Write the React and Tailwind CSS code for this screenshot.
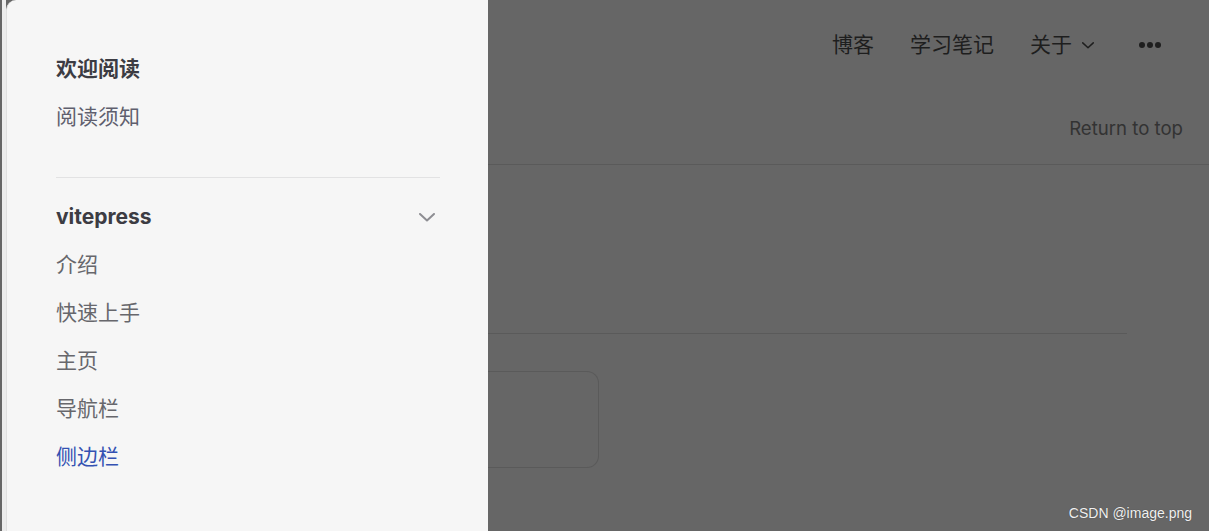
import React from "react";

const font = { fontFamily: 'Inter, "Noto Sans CJK SC", "Noto Sans", sans-serif' };

function Chevron({ className }) {
  return (
    <svg viewBox="0 0 16 9" className={className} fill="none">
      <path d="M1 1l7 6.5L15 1" stroke="currentColor" strokeWidth="2" strokeLinecap="round" strokeLinejoin="round" />
    </svg>
  );
}

export default function App() {
  const items = ["介绍", "快速上手", "主页", "导航栏"];
  return (
    <div className="flex w-[1209px] h-[531px] overflow-hidden bg-[#666666] relative" style={font}>
      <div className="w-[2px] shrink-0 bg-[#666666]" />
      <div className="w-[4px] shrink-0 bg-[#ececec]" />
      <aside className="w-[482px] shrink-0 bg-[#f6f6f6] border-l border-[#e0e0e0] rounded-tl-[10px] pl-[49px] pr-[48px] pt-[45px]">
        <div className="pb-[36px]">
          <div className="text-[21px] leading-[48px] font-bold text-[#3c3c43]">欢迎阅读</div>
          <div className="text-[21px] leading-[48px] text-[#5f5f6e]">阅读须知</div>
        </div>
        <div className="border-t border-[#e2e2e3] pt-[15px]">
          <div className="flex items-center justify-between h-[48px]">
            <span className="text-[21px] font-bold text-[#3c3c43]">vitepress</span>
            <Chevron className="w-[16px] h-[9px] mr-[5px] text-[#8e8e93]" />
          </div>
          {items.map((t) => (
            <div key={t} className="text-[21px] leading-[48px] text-[#67676c]">{t}</div>
          ))}
          <div className="text-[21px] leading-[48px] text-[#3451b2]">侧边栏</div>
        </div>
      </aside>
      <main className="flex-1 flex flex-col">
        <nav className="h-[88px] pt-[2px] flex items-center justify-end pr-[48px] text-[21px] text-[#1e1e1e]">
          <span>博客</span>
          <span className="ml-[36px]">学习笔记</span>
          <span className="ml-[36px] flex items-center">
            关于
            <Chevron className="ml-[10px] w-[12px] h-[7px] text-[#1e1e1e]" />
          </span>
          <span className="ml-[45px] flex items-center gap-[2px]">
            <span className="w-[6px] h-[6px] rounded-full bg-[#1e1e1e]" />
            <span className="w-[6px] h-[6px] rounded-full bg-[#1e1e1e]" />
            <span className="w-[6px] h-[6px] rounded-full bg-[#1e1e1e]" />
          </span>
        </nav>
        <div className="h-[77px] border-b border-[#5a5a5a] flex items-center justify-end pr-[26px] pt-[5px]">
          <span className="text-[18.6px] text-[#333333]">Return to top</span>
        </div>
        <div className="mr-[82px] mt-[168px] border-b border-[#5a5a5a]" />
        <div className="mt-[37px] w-[111px] h-[97px] border border-l-0 border-[#5a5a5a] rounded-r-[12px]" />
      </main>
      <div
        className="absolute right-[17px] bottom-[7px] text-[14px] text-[#f0f0f0]"
        style={{ fontFamily: '"Liberation Sans", sans-serif', textShadow: "0 0 1px rgba(0,0,0,0.4)" }}
      >
        CSDN @image.png
      </div>
    </div>
  );
}
